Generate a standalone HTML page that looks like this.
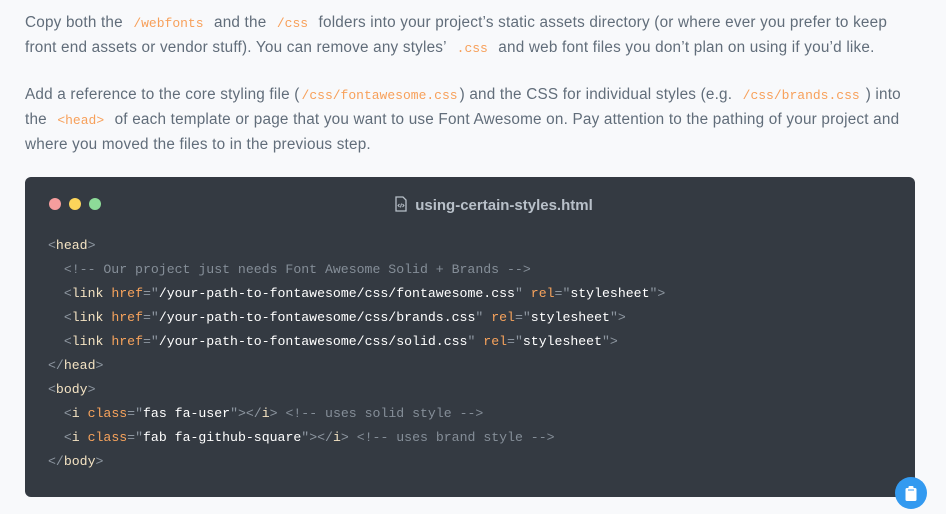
<!DOCTYPE html>
<html><head><meta charset="utf-8"><style>
html,body{margin:0;padding:0;background:#f8f9fb;width:946px;height:513px;overflow:hidden}
body{font-family:"Liberation Sans",sans-serif;color:#616d7a;font-size:15.3px;letter-spacing:0.2px}
p{position:absolute;left:25px;margin:0;line-height:24px;width:920px;white-space:nowrap}
code{font-family:"Liberation Mono",monospace;color:#f7a05a;font-size:13px;padding:0 6px;letter-spacing:0}
.blk{position:absolute;left:25px;top:177px;width:890px;height:320px;background:#343a42;border-radius:6px;letter-spacing:0}
.dot{position:absolute;top:21px;width:12px;height:12px;border-radius:50%}
.title{position:absolute;left:0;right:0;top:19px;text-align:center;color:#b8c0c9;font-size:15px;font-weight:bold;padding-left:48px}
pre{position:absolute;left:23px;top:57px;margin:0;font-family:"Liberation Mono",monospace;font-size:13.2px;line-height:24px;color:#fff}
.b{color:#8e97a1}.t{color:#f4e3c3}.a{color:#f7a35c}.c{color:#858e98}
.btn{position:absolute;left:895px;top:477px;width:32px;height:32px;border-radius:50%;background:#339af0}
</style></head><body>
<p style="top:11px">Copy both the <code>/webfonts</code> and the <code>/css</code> folders into your project’s static assets directory (or where ever you prefer to keep<br>front end assets or vendor stuff). You can remove any styles’ <code>.css</code> and web font files you don’t plan on using if you’d like.</p>
<p style="top:83px">Add a reference to the core styling file (<code style="padding:0 2px">/css/fontawesome.css</code>) and the CSS for individual styles (e.g. <code>/css/brands.css</code>) into<br>the <code>&lt;head&gt;</code> of each template or page that you want to use Font Awesome on. Pay attention to the pathing of your project and<br>where you moved the files to in the previous step.</p>
<div class="blk">
<div class="dot" style="left:24px;background:#f59d9d"></div>
<div class="dot" style="left:44px;background:#fcd55a"></div>
<div class="dot" style="left:64px;background:#8ddb98"></div>
<div class="title"><svg width="12" height="16" viewBox="0 0 12 16" style="vertical-align:-2px;margin-right:8px"><path d="M1 1h7l3 3v11H1z" fill="none" stroke="#b8c0c9" stroke-width="1.3"/><path d="M4.5 8l-1.5 1.5 1.5 1.5M7.5 8l1.5 1.5-1.5 1.5M6.5 7.5l-1 4" fill="none" stroke="#b8c0c9" stroke-width="1"/></svg>using-certain-styles.html</div>
<pre><span class="b">&lt;</span><span class="t">head</span><span class="b">&gt;</span>
  <span class="c">&lt;!-- Our project just needs Font Awesome Solid + Brands --&gt;</span>
  <span class="b">&lt;</span><span class="t">link</span> <span class="a">href</span><span class="b">="</span>/your-path-to-fontawesome/css/fontawesome.css<span class="b">"</span> <span class="a">rel</span><span class="b">="</span>stylesheet<span class="b">"&gt;</span>
  <span class="b">&lt;</span><span class="t">link</span> <span class="a">href</span><span class="b">="</span>/your-path-to-fontawesome/css/brands.css<span class="b">"</span> <span class="a">rel</span><span class="b">="</span>stylesheet<span class="b">"&gt;</span>
  <span class="b">&lt;</span><span class="t">link</span> <span class="a">href</span><span class="b">="</span>/your-path-to-fontawesome/css/solid.css<span class="b">"</span> <span class="a">rel</span><span class="b">="</span>stylesheet<span class="b">"&gt;</span>
<span class="b">&lt;/</span><span class="t">head</span><span class="b">&gt;</span>
<span class="b">&lt;</span><span class="t">body</span><span class="b">&gt;</span>
  <span class="b">&lt;</span><span class="t">i</span> <span class="a">class</span><span class="b">="</span>fas fa-user<span class="b">"&gt;&lt;/</span><span class="t">i</span><span class="b">&gt;</span> <span class="c">&lt;!-- uses solid style --&gt;</span>
  <span class="b">&lt;</span><span class="t">i</span> <span class="a">class</span><span class="b">="</span>fab fa-github-square<span class="b">"&gt;&lt;/</span><span class="t">i</span><span class="b">&gt;</span> <span class="c">&lt;!-- uses brand style --&gt;</span>
<span class="b">&lt;/</span><span class="t">body</span><span class="b">&gt;</span></pre>
</div>
<div class="btn"><svg width="32" height="32" viewBox="0 0 32 32"><rect x="10.5" y="11" width="11" height="13" rx="1.5" fill="#fff"/><rect x="13.5" y="9" width="5" height="3" rx="1" fill="#fff"/><rect x="13" y="12.5" width="6" height="1" fill="#339af0"/></svg></div>
</body></html>
